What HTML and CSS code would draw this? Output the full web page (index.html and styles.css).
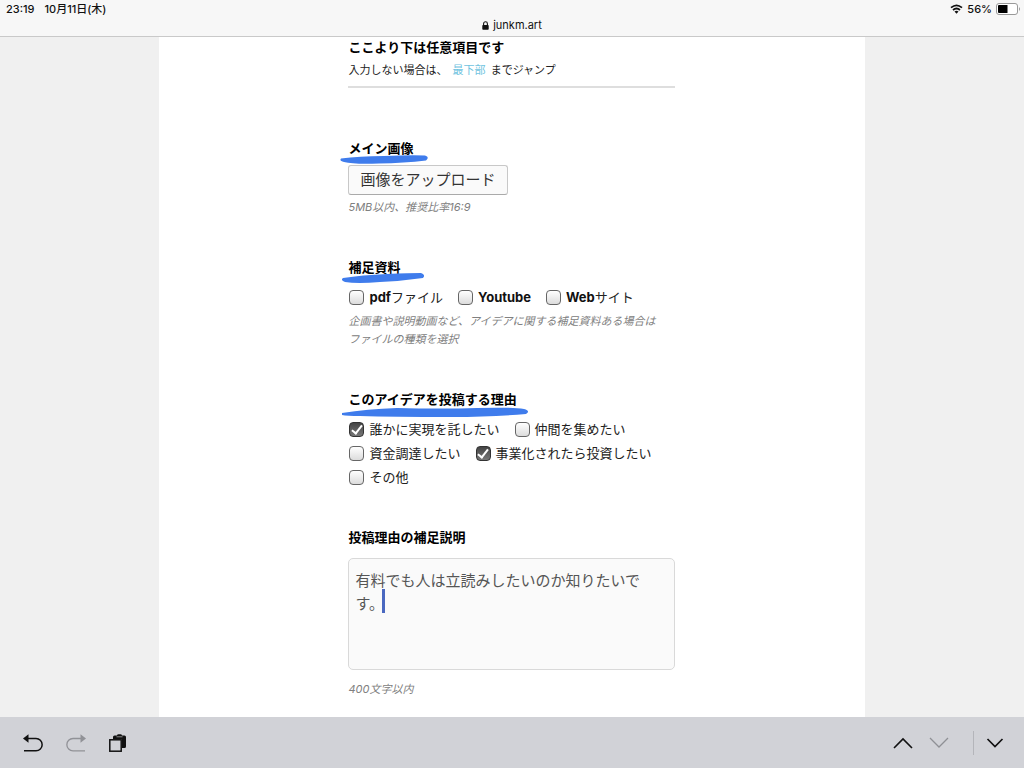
FILE: index.html
```html
<!DOCTYPE html>
<html lang="ja">
<head>
<meta charset="utf-8">
<meta name="viewport" content="width=device-width, initial-scale=1">
<title>junkm.art</title>
<link rel="stylesheet" href="styles.css">
</head>
<body>
<header class="browser-bar">
  <div class="status">
    <div class="status-group status-time"><span>23:19</span><span>10月11日(木)</span></div>
    <div class="status-group">
      <svg class="wifi" width="13" height="10" viewBox="0 0 13 10" aria-hidden="true">
        <path d="M1 3.700Q6.500-.9 12 3.700M3 6Q6.500 3 10 6" fill="none" stroke="#111" stroke-width="1.700"/>
        <path d="M4.500 7.500Q6.500 6 8.500 7.500L6.500 9.800z" fill="#111"/>
      </svg>
      <span>56%</span>
      <svg width="24" height="12" viewBox="0 0 24 12" aria-hidden="true">
        <rect x=".5" y=".5" width="21" height="11" rx="2.500" fill="#fff" stroke="#999"/>
        <path d="M3 2h8.500v8H3a1 1 0 0 1-1-1V3a1 1 0 0 1 1-1z" fill="#000"/>
        <path d="M23 4q2 2 0 4z" fill="#999"/>
      </svg>
    </div>
  </div>
  <div class="address">
    <svg width="7" height="9" viewBox="0 0 7 9" aria-hidden="true">
      <rect x=".3" y="4" width="6.400" height="4.700" rx=".8" fill="#111"/>
      <path d="M1.600 4.500V2.700a1.900 1.900 0 0 1 3.800 0v1.800" fill="none" stroke="#111" stroke-width="1.100"/>
    </svg>
    <span>junkm.art</span>
  </div>
</header>

<main class="viewport">
  <form class="page">
    <div class="column">
      <section class="intro">
        <h2 class="title">ここより下は任意項目です</h2>
        <p class="jump">入力しない場合は、 <a href="#bottom">最下部</a> までジャンプ</p>
      </section>

      <section class="field field-image">
        <h2 class="title">メイン画像
          <svg class="marker" width="90" height="12" viewBox="0 0 90 12" aria-hidden="true"><path d="M2 4.500Q20 2 45 2Q70 1 86 1.500Q91 3 87 6.500Q65 9 40 9.500Q15 10.500 5 8Q0 7 2 4.500z"/></svg>
        </h2>
        <button class="upload" type="button">画像をアップロード</button>
        <p class="hint">5MB以内、推奨比率16:9</p>
      </section>

      <section class="field">
        <h2 class="title">補足資料
          <svg class="marker" width="90" height="14" viewBox="-3 2 90 14" aria-hidden="true"><path d="M1 7Q20 4 45 3Q68 2 79 2Q84 4 81 7Q60 10 38 11Q15 13 3 11Q-2 9 1 7z"/></svg>
        </h2>
        <div class="choices">
          <label class="choice"><input type="checkbox"><span><b>pdf</b>ファイル</span></label>
          <label class="choice"><input type="checkbox"><span><b>Youtube</b></span></label>
          <label class="choice"><input type="checkbox"><span><b>Web</b>サイト</span></label>
        </div>
        <p class="hint">企画書や説明動画など、アイデアに関する補足資料ある場合は<br>ファイルの種類を選択</p>
      </section>

      <section class="field">
        <h2 class="title">このアイデアを投稿する理由
          <svg class="marker" width="190" height="14" viewBox="-3 -2 190 14" aria-hidden="true"><path d="M0 6Q25 2 55 1Q100 2 135 1Q170 0 182 2Q189 4 184 7Q150 10 110 10Q50 10 18 9Q5 9 0 8z"/></svg>
        </h2>
        <div class="choices">
          <label class="choice"><input type="checkbox" checked><span>誰かに実現を託したい</span></label>
          <label class="choice"><input type="checkbox"><span>仲間を集めたい</span></label>
          <label class="choice"><input type="checkbox"><span>資金調達したい</span></label>
          <label class="choice"><input type="checkbox" checked><span>事業化されたら投資したい</span></label>
          <label class="choice"><input type="checkbox"><span>その他</span></label>
        </div>
      </section>

      <section class="field field-note" id="bottom">
        <label class="title" for="note">投稿理由の補足説明</label>
        <div class="note-box">
          <textarea id="note">有料でも人は立読みしたいのか知りたいです。</textarea>
          <span class="caret"></span>
        </div>
        <p class="hint">400文字以内</p>
      </section>
    </div>
  </form>
</main>

<footer class="keyboard-bar">
  <div class="tools">
    <button type="button" aria-label="元に戻す">
      <svg width="20" height="18" viewBox="0 0 20 18"><path d="M5 4.500h8a6 6 0 0 1 0 12.300H1" fill="none" stroke="#111" stroke-width="1.500"/><path d="M0 4.500L5.500.3v8.400z" fill="#111"/></svg>
    </button>
    <button type="button" aria-label="やり直す">
      <svg width="20" height="18" viewBox="0 0 20 18"><path d="M15 4.500H7a6 6 0 0 0 0 12.300h12" fill="none" stroke="#919297" stroke-width="1.300"/><path d="M20 4.500L14.500.3v8.400z" fill="#919297"/></svg>
    </button>
    <button type="button" aria-label="ペースト">
      <svg width="18" height="18" viewBox="0 0 18 18"><path d="M4 4V3a1.500 1.500 0 0 1 1.500-1.500H8A1.500 1.500 0 0 1 9.500.2h2A1.500 1.500 0 0 1 13 1.500h2.500A1.500 1.500 0 0 1 17 3v9.500a1.500 1.500 0 0 1-1.500 1.500H13V5H4z" fill="#111"/><path d="M7.500 2.800h6" stroke="#bbb" stroke-width=".7"/><rect x=".8" y="5.800" width="11.400" height="11.400" fill="#d1d2d7" stroke="#111" stroke-width="1.500"/></svg>
    </button>
  </div>
  <div class="steps">
    <button type="button" aria-label="前へ">
      <svg width="20" height="12" viewBox="0 0 20 12"><path d="M1 11L10 2l9 9" fill="none" stroke="#111" stroke-width="1.600"/></svg>
    </button>
    <button type="button" aria-label="次へ">
      <svg width="20" height="12" viewBox="0 0 20 12"><path d="M1 1l9 9 9-9" fill="none" stroke="#8f9095" stroke-width="1.300"/></svg>
    </button>
    <span class="divider"></span>
    <button type="button" aria-label="閉じる">
      <svg width="18" height="12" viewBox="0 0 18 12"><path d="M1.500 2L9 9.500 16.500 2" fill="none" stroke="#111" stroke-width="1.700"/></svg>
    </button>
  </div>
</footer>
</body>
</html>
```
FILE: styles.css
```css
* { box-sizing: border-box; }

body {
  margin: 0;
  height: 100vh;
  display: flex;
  flex-direction: column;
  overflow: hidden;
  background: #f0f0f0;
  color: #111;
  font-family: Inter, "Noto Sans CJK JP", sans-serif;
}

h2, p { margin: 0; }

.browser-bar {
  flex: none;
  height: 37px;
  background: #f7f7f7;
  border-bottom: 1px solid #c9c9c9;
}

.status {
  display: flex;
  justify-content: space-between;
  height: 18px;
  padding: 0 4px 0 6px;
  font-size: 11px;
  font-weight: 500;
  line-height: 18px;
}

.status-group { display: flex; align-items: center; gap: 4px; }
.status-time { gap: 10px; }

.address {
  display: flex;
  align-items: center;
  justify-content: center;
  gap: 4px;
  height: 14px;
  font-size: 11px;
  line-height: 14px;
}

.viewport { flex: 1; min-height: 0; overflow: hidden; }

.page {
  width: 69%;
  min-height: 100%;
  margin: 0 auto;
  background: #fff;
}

.column { width: 327px; max-width: 100%; margin: 0 auto; }

.title {
  display: block;
  position: relative;
  font-size: 13px;
  font-weight: 700;
  line-height: 20px;
  color: #000;
}

.intro { padding-bottom: 6px; border-bottom: 2px solid #dedede; }

.jump { margin-top: 3px; font-size: 11px; line-height: 20px; color: #222; }
.jump a { margin: 0 2px; color: #6fc3e0; text-decoration: none; }

.hint {
  font-size: 11px;
  font-style: italic;
  font-weight: 400;
  line-height: 18px;
  color: #808080;
}

.field { margin-top: 41px; }
.field-image { margin-top: 50px; }
.field-note { margin-top: 38px; }

.marker {
  position: absolute;
  left: -9px;
  top: 16px;
  fill: #3f7cec;
}

.upload {
  display: block;
  height: 30px;
  margin: 7px 0 3px;
  padding: 0 11px;
  border: 1px solid #c8c8c8;
  border-bottom-color: #aaa;
  border-radius: 3px;
  background: #fafafa;
  color: #333;
  font-family: inherit;
  font-size: 15px;
  line-height: 26px;
}

.choices {
  display: flex;
  flex-wrap: wrap;
  column-gap: 14px;
  margin: 8px 0 3px;
}

.choice {
  display: flex;
  align-items: center;
  gap: 5px;
  font-size: 13px;
  line-height: 24px;
  color: #222;
}
.choice b { color: #111; }

.choice input {
  appearance: none;
  flex: none;
  width: 15px;
  height: 15px;
  margin: 0 0 0 1px;
  border: 1px solid #666;
  border-radius: 4px;
  background: linear-gradient(#fff, #dcdcdc);
}

.choice input:checked {
  display: grid;
  place-items: center;
  border-color: #333;
  background: linear-gradient(#444, #777);
}

.choice input:checked::before {
  content: "";
  box-sizing: border-box;
  width: 6px;
  height: 11px;
  margin-bottom: 2px;
  border: solid #fff;
  border-width: 0 2px 2px 0;
  transform: rotate(38deg);
}

.note-box { position: relative; margin: 11px 0 10px; }

.note-box textarea {
  display: block;
  width: 100%;
  height: 112px;
  padding: 10px 6px;
  border: 1px solid #d9d9d9;
  border-radius: 5px;
  background: #fafafa;
  color: #555;
  font-family: inherit;
  font-size: 15px;
  font-weight: 400;
  line-height: 23px;
  resize: none;
}

.caret {
  position: absolute;
  left: 34px;
  top: 31px;
  width: 3px;
  height: 24px;
  background: #4a68c0;
}

.keyboard-bar {
  flex: none;
  display: flex;
  align-items: center;
  justify-content: space-between;
  height: 51px;
  padding: 0 20px 0 23px;
  background: #d1d2d7;
}

.keyboard-bar button {
  display: flex;
  padding: 0;
  border: 0;
  background: none;
}

.tools { display: flex; gap: 23px; }
.steps { display: flex; align-items: center; gap: 16px; }
.divider { width: 1px; height: 24px; margin: 0 -4px 0 8px; background: #b4b5ba; }
```
